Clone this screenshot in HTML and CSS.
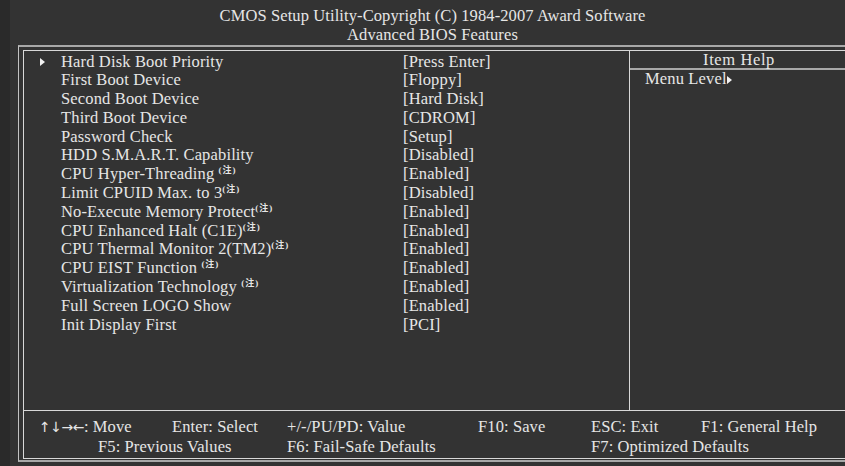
FILE: index.html
```html
<!DOCTYPE html>
<html lang="en">
  <head>
    <meta charset="UTF-8" />
    <meta name="viewport" content="width=device-width, initial-scale=1.0" />
    <title>Advanced BIOS Features</title>
    <link rel="stylesheet" href="styles.css">
  </head>
  <body>
    <div class="screen">
      <header class="title">
        <div>CMOS Setup Utility-Copyright (C) 1984-2007 Award Software</div>
        <div>Advanced BIOS Features</div>
      </header>
      <div class="frame">
        <div class="box">
          <main class="panes">
            <ul class="items">
              <li class="item"><span class="mark"><i class="ptr"></i></span><span class="label">Hard Disk Boot Priority</span><span class="value">[Press Enter]</span></li>
              <li class="item"><span class="mark"></span><span class="label">First Boot Device</span><span class="value">[Floppy]</span></li>
              <li class="item"><span class="mark"></span><span class="label">Second Boot Device</span><span class="value">[Hard Disk]</span></li>
              <li class="item"><span class="mark"></span><span class="label">Third Boot Device</span><span class="value">[CDROM]</span></li>
              <li class="item"><span class="mark"></span><span class="label">Password Check</span><span class="value">[Setup]</span></li>
              <li class="item"><span class="mark"></span><span class="label">HDD S.M.A.R.T. Capability</span><span class="value">[Disabled]</span></li>
              <li class="item"><span class="mark"></span><span class="label">CPU Hyper-Threading <sup class="note">(注)</sup></span><span class="value">[Enabled]</span></li>
              <li class="item"><span class="mark"></span><span class="label">Limit CPUID Max. to 3<sup class="note">(注)</sup></span><span class="value">[Disabled]</span></li>
              <li class="item"><span class="mark"></span><span class="label">No-Execute Memory Protect<sup class="note">(注)</sup></span><span class="value">[Enabled]</span></li>
              <li class="item"><span class="mark"></span><span class="label">CPU Enhanced Halt (C1E)<sup class="note">(注)</sup></span><span class="value">[Enabled]</span></li>
              <li class="item"><span class="mark"></span><span class="label">CPU Thermal Monitor 2(TM2)<sup class="note">(注)</sup></span><span class="value">[Enabled]</span></li>
              <li class="item"><span class="mark"></span><span class="label">CPU EIST Function <sup class="note">(注)</sup></span><span class="value">[Enabled]</span></li>
              <li class="item"><span class="mark"></span><span class="label">Virtualization Technology <sup class="note">(注)</sup></span><span class="value">[Enabled]</span></li>
              <li class="item"><span class="mark"></span><span class="label">Full Screen LOGO Show</span><span class="value">[Enabled]</span></li>
              <li class="item"><span class="mark"></span><span class="label">Init Display First</span><span class="value">[PCI]</span></li>
            </ul>
            <aside class="help">
              <h2>Item Help</h2>
              <p>Menu Level<i class="ptr"></i></p>
            </aside>
          </main>
          <footer class="keys">
            <span class="k-move"><span class="arrows">↑↓→←</span>: Move</span>
            <span class="k-enter">Enter: Select</span>
            <span class="k-value">+/-/PU/PD: Value</span>
            <span class="k-save">F10: Save</span>
            <span class="k-exit">ESC: Exit</span>
            <span class="k-help">F1: General Help</span>
            <span class="k-prev">F5: Previous Values</span>
            <span class="k-fail">F6: Fail-Safe Defaults</span>
            <span class="k-opt">F7: Optimized Defaults</span>
          </footer>
        </div>
      </div>
    </div>
  </body>
</html>
```

FILE: styles.css
```css
* {
  padding: 0;
  margin: 0;
  box-sizing: border-box;
}
html {
  font-size: 16.5px;
  font-family: 'Liberation Serif', 'Times New Roman', 'Noto Sans CJK SC', serif;
  line-height: 18.5px;
  color: #e6e6e6;
  background-color: #2a2a2a;
}
body {
  width: 845px;
  height: 466px;
  overflow: hidden;
}
.screen {
  margin-left: 10px;
  width: 845px;
  height: 466px;
  background-color: #333;
}
.title {
  height: 45px;
  padding-top: 7px;
  text-align: center;
  letter-spacing: 0.1px;
}
.frame {
  margin-left: 8px;
  width: 836px;
  border: 1px solid #c4c4c4;
  border-top: 2px solid #a8a8a8;
  border-bottom: 2px solid #a8a8a8;
  padding: 3px 4px 1px 4px;
}
.box {
  border: 1px solid #d8d8d8;
}
.panes {
  display: flex;
  height: 359px;
}
.items {
  list-style: none;
  width: 606px;
  padding-top: 1.5px;
  border-right: 1px solid #d8d8d8;
  letter-spacing: 0.15px;
}
.item {
  display: grid;
  grid-template-columns: 37px 342px 1fr;
  line-height: 18.8px;
}
.mark {
  display: flex;
  align-items: center;
  padding-left: 16px;
}
.ptr {
  display: inline-block;
  width: 0;
  height: 0;
  border-left: 5px solid #f2f2f2;
  border-top: 4.5px solid transparent;
  border-bottom: 4.5px solid transparent;
}
.note {
  font-family: 'Liberation Serif', 'Noto Sans CJK SC', serif;
  font-size: 9px;
  font-weight: bold;
  line-height: 0;
  vertical-align: 6px;
  letter-spacing: 1px;
}
.help {
  flex: 1;
}
.help h2 {
  font-size: 16.5px;
  font-weight: normal;
  line-height: 17px;
  text-align: center;
  letter-spacing: 0.6px;
  border-bottom: 2px solid #a8a8a8;
}
.help p {
  padding-left: 15px;
  letter-spacing: 0.15px;
}
.keys {
  display: grid;
  grid-template-columns: 59px 74px 115px 191px 113px 110px 1fr;
  height: 48px;
  padding: 7px 0 0 15px;
  border-top: 1px solid #d8d8d8;
  letter-spacing: 0.1px;
}
.arrows {
  font-family: 'DejaVu Sans', sans-serif;
  font-size: 14px;
  letter-spacing: -0.5px;
}
.k-move { grid-column: 1 / 3; }
.k-enter { grid-column: 3; }
.k-value { grid-column: 4; }
.k-save { grid-column: 5; }
.k-exit { grid-column: 6; }
.k-help { grid-column: 7; }
.k-prev { grid-column: 2 / 4; }
.k-fail { grid-column: 4 / 6; }
.k-opt { grid-column: 6 / 8; }
```
